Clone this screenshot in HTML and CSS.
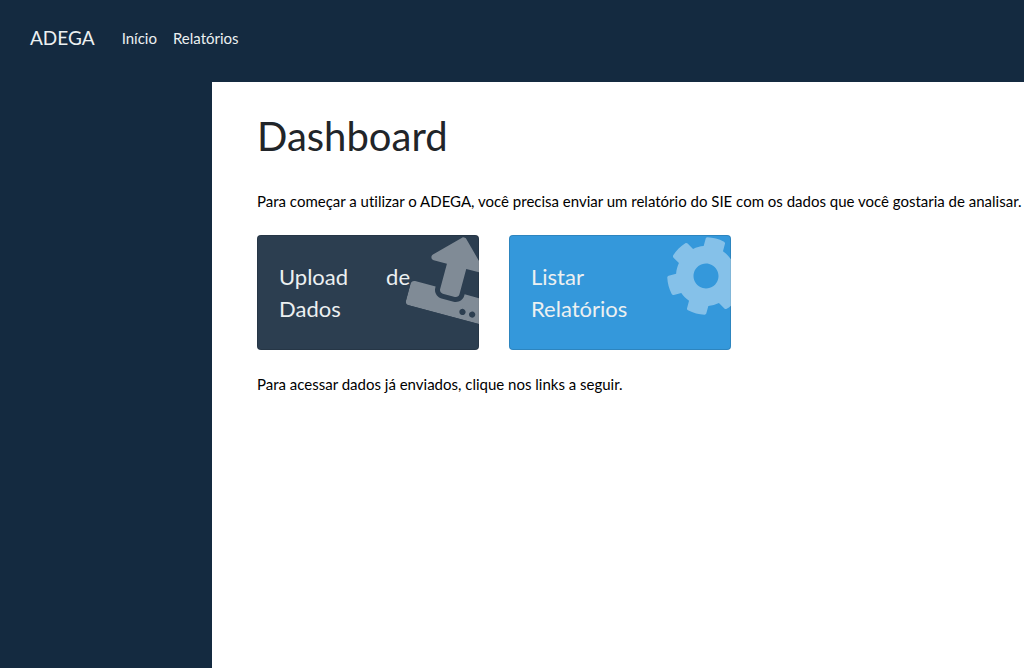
FILE: index.html
```html
<!DOCTYPE html>
<html lang="pt-BR">
<head>
<meta charset="utf-8">
<title>ADEGA - Dashboard</title>
<meta name="viewport" content="width=device-width, initial-scale=1">
<link rel="stylesheet" href="styles.css">
</head>
<body>
<header class="navbar">
  <a class="brand" href="#">ADEGA</a>
  <nav class="nav">
    <a class="nav-link" href="#">Início</a>
    <a class="nav-link" href="#">Relatórios</a>
  </nav>
</header>
<div class="layout">
  <aside class="sidebar"></aside>
  <main class="content">
    <h1 class="title">Dashboard</h1>
    <p class="text">Para começar a utilizar o ADEGA, você precisa enviar um relatório do SIE com os dados que você gostaria de analisar.</p>
    <div class="cards">
      <a class="card card-dark" href="#">
        <svg class="card-icon" viewBox="0 0 512 512" aria-hidden="true"><path d="M296 384h-80c-13.300 0-24-10.700-24-24V192h-87.700c-17.800 0-26.700-21.500-14.100-34.100L242.300 5.700c7.500-7.500 19.800-7.500 27.300 0l152.200 152.200c12.600 12.600 3.700 34.100-14.100 34.100H320v168c0 13.300-10.700 24-24 24zm216-8v112c0 13.300-10.700 24-24 24H24c-13.300 0-24-10.700-24-24V376c0-13.300 10.700-24 24-24h136v8c0 30.900 25.100 56 56 56h80c30.900 0 56-25.100 56-56v-8h136c13.300 0 24 10.700 24 24zm-124 88c0-11-9-20-20-20s-20 9-20 20 9 20 20 20 20-9 20-20zm64 0c0-11-9-20-20-20s-20 9-20 20 9 20 20 20 20-9 20-20z"/></svg>
        <span class="card-label">Upload de Dados</span>
      </a>
      <a class="card card-blue" href="#">
        <svg class="card-icon" viewBox="0 0 512 512" aria-hidden="true"><path d="M487.400 315.700l-42.600-24.600c4.300-23.200 4.300-47 0-70.200l42.600-24.600c4.900-2.800 7.100-8.600 5.500-14-11.100-35.600-30-67.800-54.700-94.600-3.800-4.100-10-5.100-14.800-2.300L380.800 110c-17.900-15.400-38.500-27.300-60.800-35.100V25.800c0-5.600-3.900-10.500-9.400-11.700-36.700-8.200-74.300-7.800-109.200 0-5.500 1.200-9.400 6.100-9.400 11.700V75c-22.200 7.900-42.800 19.800-60.800 35.100L88.700 85.500c-4.900-2.800-11-1.900-14.800 2.300-24.700 26.700-43.600 58.900-54.700 94.600-1.700 5.400.6 11.200 5.500 14L67.300 221c-4.300 23.200-4.300 47 0 70.200l-42.600 24.600c-4.900 2.800-7.100 8.600-5.500 14 11.100 35.600 30 67.800 54.700 94.600 3.800 4.100 10 5.100 14.800 2.300l42.600-24.600c17.900 15.400 38.500 27.300 60.800 35.100v49.200c0 5.600 3.900 10.500 9.400 11.700 36.700 8.200 74.300 7.800 109.200 0 5.500-1.200 9.400-6.100 9.400-11.700v-49.200c22.200-7.900 42.800-19.800 60.800-35.100l42.600 24.600c4.900 2.800 11 1.900 14.800-2.300 24.700-26.700 43.600-58.900 54.700-94.600 1.500-5.500-.7-11.300-5.600-14.100zM256 336c-44.100 0-80-35.900-80-80s35.900-80 80-80 80 35.900 80 80-35.900 80-80 80z"/></svg>
        <span class="card-label">Listar Relatórios</span>
      </a>
    </div>
    <p class="text">Para acessar dados já enviados, clique nos links a seguir.</p>
  </main>
</div>
</body>
</html>
```

FILE: styles.css
```css
* { box-sizing: border-box; }

body {
  margin: 0;
  min-height: 100vh;
  display: flex;
  flex-direction: column;
  background: #fff;
  color: #212529;
  font: 15px/24px Lato, "Open Sans", sans-serif;
  font-variant-ligatures: none;
}

a { color: inherit; text-decoration: none; }

.navbar {
  display: flex;
  align-items: center;
  gap: 19px;
  padding: 22px 30px 28px;
  background: #142a40;
  color: #ecf0f1;
}

.brand { font-size: 19px; line-height: 32px; }

.nav { display: flex; }

.nav-link { padding: 4px 8px; }

.layout { flex: 1; display: flex; }

.sidebar { width: 212px; flex: none; background: #142a40; }

.content { flex: 1; min-width: 0; padding: 30px 0 30px 45px; }

.title {
  margin: 0;
  font-size: 40px;
  line-height: 48px;
  font-weight: 400;
}

.text { margin: 0; color: #000; }

.title + .text { margin-top: 29px; }

.cards {
  display: flex;
  flex-wrap: wrap;
  gap: 30px;
  margin: 22px 0;
}

.card {
  position: relative;
  flex: 0 0 222px;
  overflow: hidden;
  padding: 26px 69px 25px 22px;
  border-radius: 4px;
  box-shadow: inset 0 0 0 1px rgba(0, 0, 0, 0.125);
  color: #ecf0f1;
}

.card-dark { background-color: #2c3e50; }
.card-blue { background-color: #3498db; }

.card-icon {
  position: absolute;
  top: 1px;
  right: -15px;
  width: 80px;
  height: 80px;
  fill: rgba(255, 255, 255, 0.4);
  transform: rotate(15deg);
}

.card-label {
  position: relative;
  display: block;
  font-size: 22px;
  line-height: 32px;
  text-align: justify;
}
```
